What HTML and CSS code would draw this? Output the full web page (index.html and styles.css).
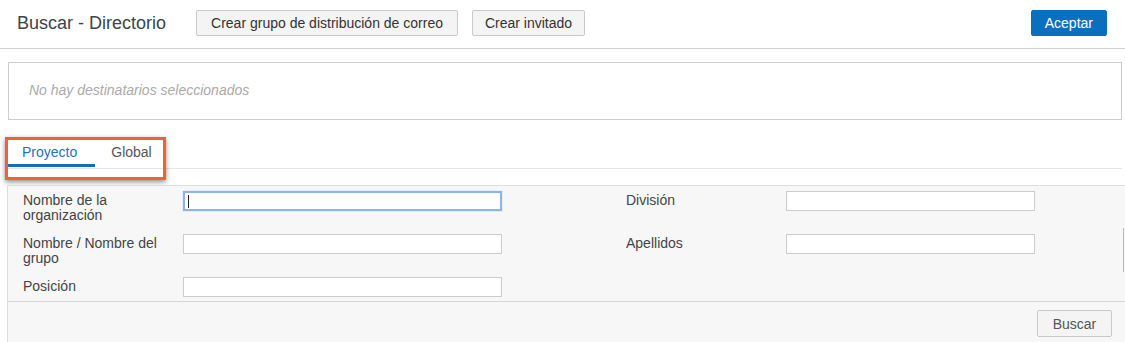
FILE: index.html
```html
<!DOCTYPE html>
<html lang="es">
<head>
<meta charset="utf-8">
<title>Buscar - Directorio</title>
<link rel="stylesheet" href="styles.css">
</head>
<body>
<div class="page">
  <header class="header">
    <h1 class="title">Buscar - Directorio</h1>
    <div class="header-actions">
      <button class="btn btn-wide">Crear grupo de distribución de correo</button>
      <button class="btn">Crear invitado</button>
    </div>
    <button class="btn btn-primary">Aceptar</button>
  </header>

  <div class="recipients">
    <span class="placeholder">No hay destinatarios seleccionados</span>
  </div>

  <nav class="tabs">
    <div class="tab active">Proyecto</div>
    <div class="tab">Global</div>
    <div class="highlight"></div>
  </nav>

  <section class="search">
    <div class="form-grid">
      <label class="label">Nombre de la organización</label>
      <div class="field"><input class="input input-left focused" type="text"><span class="caret"></span></div>
      <label class="label">División</label>
      <div class="field"><input class="input input-right" type="text"></div>

      <label class="label">Nombre / Nombre del grupo</label>
      <div class="field"><input class="input input-left" type="text"></div>
      <label class="label">Apellidos</label>
      <div class="field"><input class="input input-right" type="text"></div>

      <label class="label">Posición</label>
      <div class="field"><input class="input input-left" type="text"></div>
    </div>
    <div class="footer">
      <button class="btn btn-search">Buscar</button>
    </div>
    <div class="scroll-edge"></div>
  </section>
</div>
</body>
</html>
```

FILE: styles.css
```css
* { box-sizing: border-box; }

html, body {
  margin: 0;
  padding: 0;
  background: #ffffff;
  font-family: "Liberation Sans", Arial, sans-serif;
  color: #333333;
}

.page {
  position: relative;
  width: 1125px;
  height: 342px;
  overflow: hidden;
}

.header {
  display: flex;
  align-items: center;
  height: 49px;
  padding: 0 18px 2px 17px;
  border-bottom: 1px solid #cfcfcf;
}

.title {
  margin: 0;
  font-size: 18px;
  font-weight: normal;
  color: #3b4250;
}

.header-actions {
  display: flex;
  gap: 14px;
  margin-left: 30px;
  flex: 1;
}

.btn {
  font-family: "Liberation Sans", Arial, sans-serif;
  font-size: 14px;
  color: #333333;
  height: 26px;
  padding: 0 12px;
  background: #f4f4f4;
  border: 1px solid #c9c9c9;
  border-radius: 2px;
  cursor: pointer;
}

.btn-wide { padding: 0 14px; }

.btn-primary {
  background: #0a6fbf;
  border-color: #0a6fbf;
  color: #ffffff;
  padding: 0 13px;
}

.recipients {
  display: flex;
  align-items: center;
  margin: 13px 3px 0 8px;
  height: 58px;
  padding: 0 0 2px 20px;
  border: 1px solid #cccccc;
}

.placeholder {
  font-size: 14px;
  font-style: italic;
  color: #aaaaaa;
}

.tabs {
  position: relative;
  display: flex;
  margin: 21px 3px 0 8px;
  padding-bottom: 1px;
  border-bottom: 1px solid #e6e6e6;
}

.tab {
  font-size: 14px;
  line-height: 16px;
  padding: 3px 16px 4px 16px;
  color: #555555;
  border-bottom: 3px solid transparent;
}

.tab.active {
  color: #1a73c4;
  border-bottom-color: #126fbf;
  padding-left: 14px;
  padding-right: 18px;
}

.highlight {
  position: absolute;
  left: -3px;
  top: -4px;
  width: 161px;
  height: 43px;
  border: 3px solid #ee6233;
  box-shadow: 0 2px 5px rgba(0, 0, 0, 0.45);
  pointer-events: none;
}

.search {
  position: relative;
  margin: 16px 0 0 7px;
  background: #f7f7f7;
  border-top: 1px solid #dddddd;
  border-left: 1px solid #dddddd;
  height: 160px;
}

.form-grid {
  display: grid;
  grid-template-columns: 160px 443px 160px 249px;
  row-gap: 11px;
  padding: 5px 0 4px 15px;
  border-bottom: 1px solid #d6d6d6;
}

.label {
  font-size: 14px;
  line-height: 15px;
  padding-top: 2px;
  color: #444444;
  min-height: 32px;
}

.label:last-of-type { min-height: 0; }

.field {
  position: relative;
  display: flex;
  align-items: flex-start;
}

.input {
  height: 20px;
  margin: 0;
  border: 1px solid #cccccc;
  background: #ffffff;
  padding: 0 4px;
  font-family: "Liberation Sans", Arial, sans-serif;
  font-size: 14px;
  outline: none;
}

.input-left { width: 319px; }
.input-right { width: 249px; }

.input.focused {
  border: 2px solid #8cb3ec;
  box-shadow: 0 0 1px #8cb3ec;
}

.caret {
  position: absolute;
  left: 5px;
  top: 4px;
  width: 1px;
  height: 13px;
  background: #222222;
}

.footer {
  display: flex;
  justify-content: flex-end;
  padding: 8px 13px 0 0;
}

.btn-search {
  width: 75px;
  height: 27px;
  padding: 0;
  color: #555555;
}

.scroll-edge {
  position: absolute;
  right: 1px;
  top: 42px;
  width: 1px;
  height: 44px;
  background: #bbbbbb;
}
```
